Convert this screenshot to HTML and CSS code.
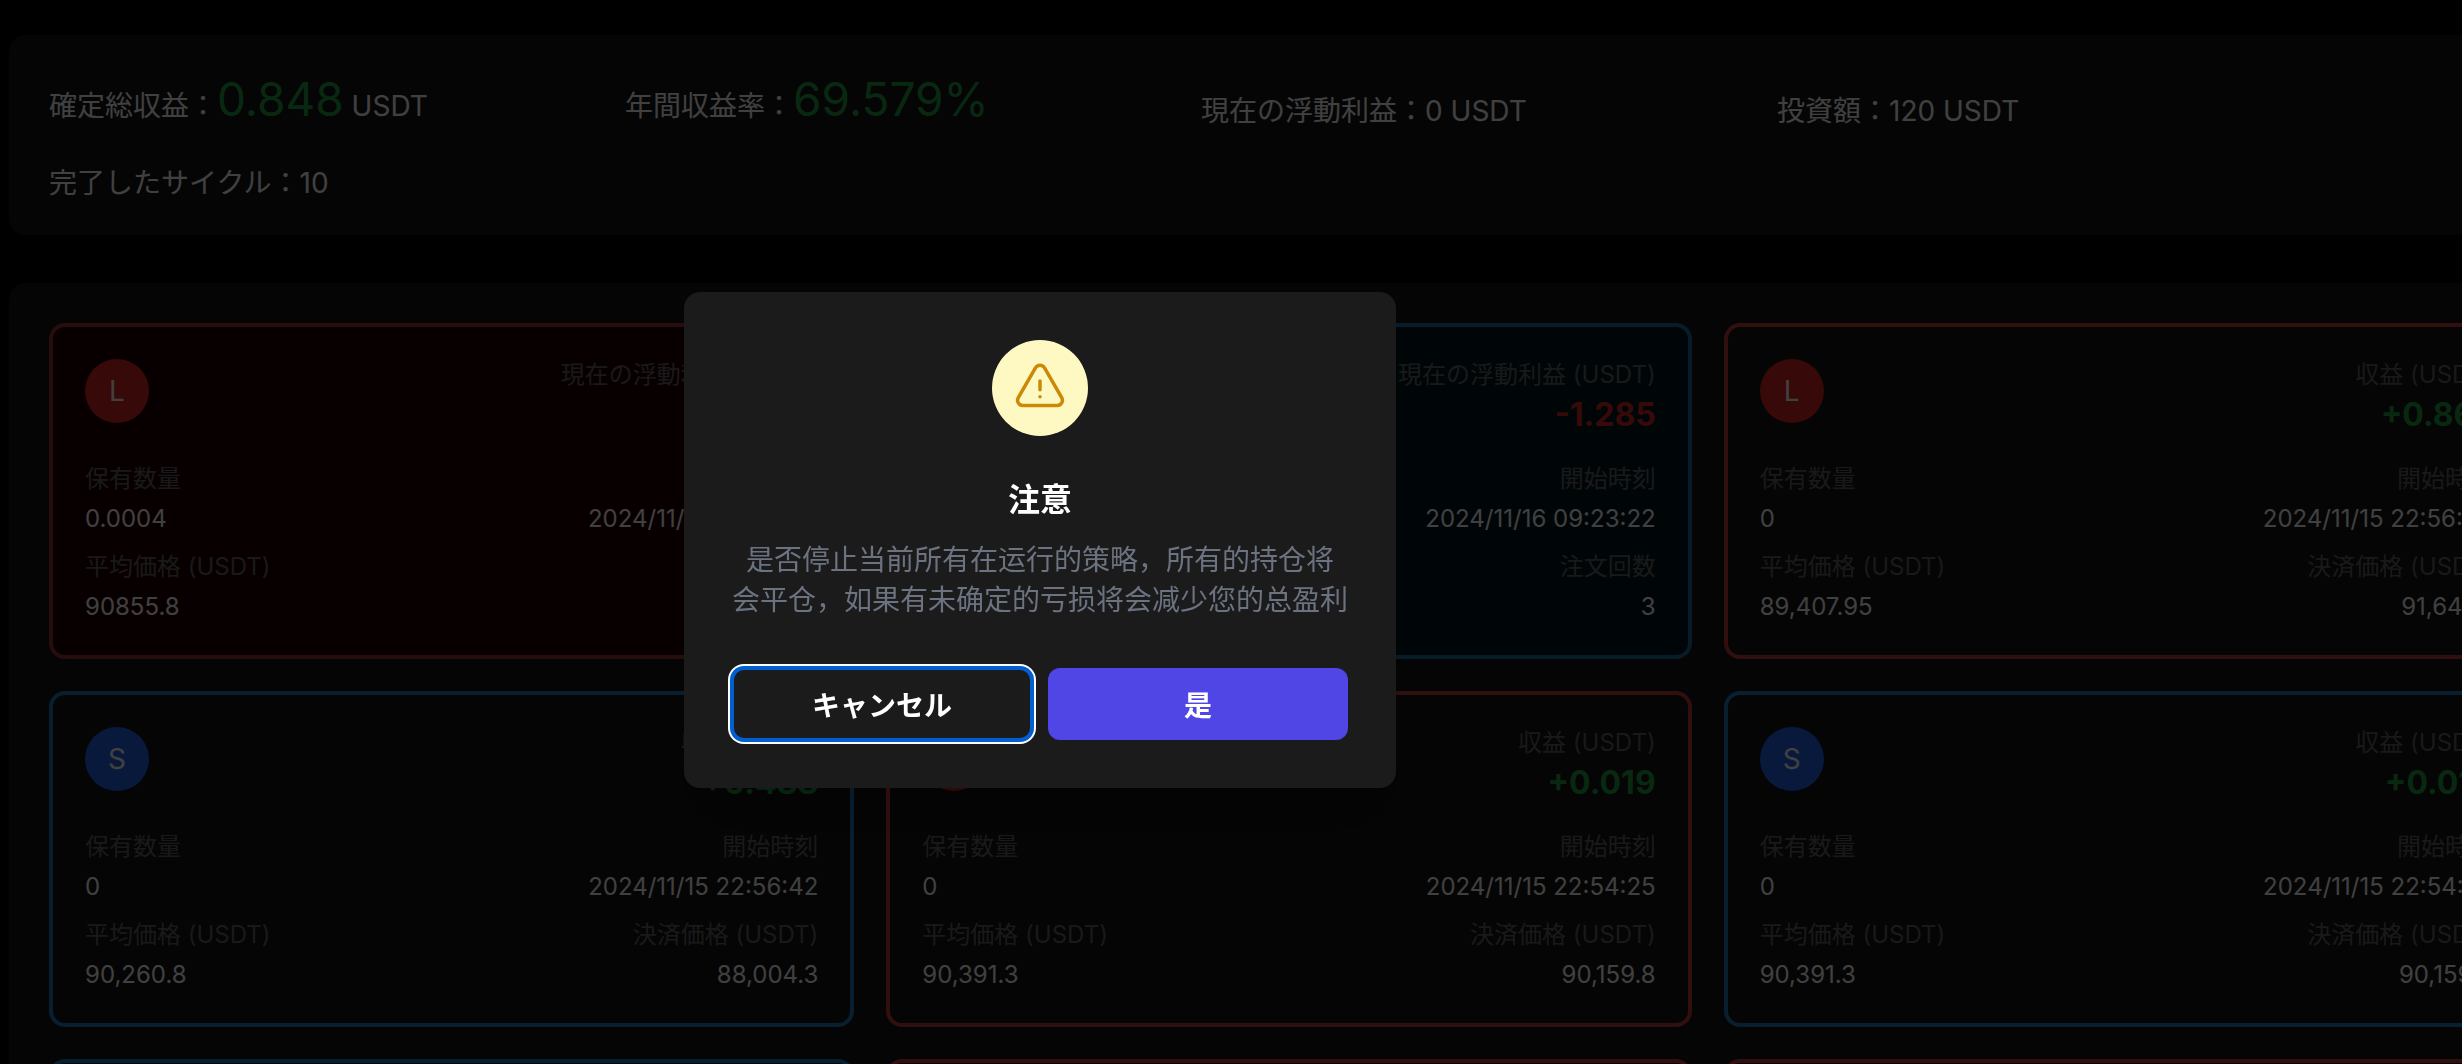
FILE: index.html
```
<!DOCTYPE html>
<html lang="ja">
<head>
  <meta charset="UTF-8" />
  <meta name="viewport" content="width=device-width, initial-scale=1.0" />
  <title>戦略</title>
  <link rel="stylesheet" href="styles.css">
</head>
<body>
  <main class="page">
    <section class="panel summary">
      <div class="stat">確定総収益：<span class="big">0.848</span> USDT</div>
      <div class="stat">年間収益率：<span class="big">69.579%</span></div>
      <div class="stat">現在の浮動利益：0 USDT</div>
      <div class="stat">投資額：120 USDT</div>
      <div class="stat">完了したサイクル：10</div>
    </section>

    <section class="panel cards" id="cards"></section>
  </main>

  <div class="overlay">
    <div class="dialog" role="dialog" aria-modal="true" aria-labelledby="dialogTitle" lang="zh-CN">
      <div class="dialog-icon">
        <svg viewBox="0 0 24 24" fill="none" stroke="currentColor" stroke-width="1.5" stroke-linecap="round" stroke-linejoin="round" aria-hidden="true">
          <path d="M12 9v3.75m-9.303 3.376c-.866 1.5.217 3.374 1.948 3.374h14.71c1.73 0 2.813-1.874 1.948-3.374L13.949 3.378c-.866-1.5-3.032-1.5-3.898 0L2.697 16.126zM12 15.75h.007v.008H12v-.008z" />
        </svg>
      </div>
      <h3 id="dialogTitle">注意</h3>
      <p>是否停止当前所有在运行的策略，所有的持仓将<br>会平仓，如果有未确定的亏损将会减少您的总盈利</p>
      <div class="dialog-actions">
        <button type="button" class="btn-cancel" lang="ja">キャンセル</button>
        <button type="button" class="btn-confirm">是</button>
      </div>
    </div>
  </div>

  <script src="script.js"></script>
</body>
</html>
```
FILE: styles.css
```
* {
  box-sizing: border-box;
}

body {
  margin: 0;
  height: 100vh;
  overflow: hidden;
  background: #000;
  color: #fff;
  font-family: Inter, 'Noto Sans CJK JP', sans-serif;
  font-size: 24px;
  line-height: 32px;
}

/* the panels run past the right edge of the window */
.page {
  display: flex;
  flex-direction: column;
  gap: 48px;
  margin: 35px -107px 0 9px;
}

.panel {
  background: #141414;
  border-radius: 16px;
}

.summary {
  display: flex;
  flex-wrap: wrap;
  align-items: flex-end;
  row-gap: 32px;
  padding: 32px 40px;
  font-size: 28px;
  line-height: 40px;
}

.stat {
  width: 576px;
}

.big {
  color: #22a045;
  font-size: 46px;
  line-height: 64px;
}

.cards {
  display: grid;
  grid-template-columns: repeat(3, 1fr);
  gap: 32px;
  padding: 40px;
}

.card {
  border: 4px solid;
  border-radius: 16px;
  padding: 32px;
}

.card.long {
  border-color: #c83c3c;
}

.card.short {
  border-color: #207cc0;
}

.card.long.running {
  border-color: #a03434;
  background: #200000;
}

.card.short.running {
  border-color: #1c6ca0;
  background: #001820;
}

.card-head {
  display: flex;
  justify-content: space-between;
  margin-bottom: 24px;
}

.side {
  width: 64px;
  height: 64px;
  border-radius: 50%;
  font-size: 28px;
  line-height: 64px;
  text-align: center;
}

.long .side {
  background: #dc2626;
}

.short .side {
  background: #2563eb;
}

.label {
  color: #666;
}

.right {
  text-align: right;
}

.profit {
  font-size: 32px;
  font-weight: 700;
  line-height: 48px;
}

.up {
  color: #22a045;
}

.down {
  color: #dc2626;
}

.card-body {
  display: grid;
  grid-template-columns: 1fr 1fr;
  row-gap: 16px;
}

.card-body .label {
  margin-bottom: 8px;
}

.overlay {
  position: fixed;
  inset: 0;
  display: flex;
  align-items: center;
  justify-content: center;
  padding: 16px 382px 0 0;
  background: rgba(0, 0, 0, 0.75);
}

.dialog {
  width: 100%;
  max-width: 712px;
  padding: 48px;
  background: #1b1b1b;
  border-radius: 16px;
  box-shadow: 0 40px 50px -10px rgba(0, 0, 0, 0.1), 0 16px 20px -12px rgba(0, 0, 0, 0.1);
  font-family: Inter, 'Noto Sans CJK SC', sans-serif;
  text-align: center;
}

.dialog-icon {
  display: flex;
  align-items: center;
  justify-content: center;
  width: 96px;
  height: 96px;
  margin: 0 auto 40px;
  border-radius: 50%;
  background: #fef9c3;
  color: #ca8a04;
}

.dialog-icon svg {
  width: 56px;
  height: 56px;
}

.dialog h3 {
  margin: 0 0 16px;
  font-size: 32px;
  font-weight: 600;
  line-height: 48px;
}

.dialog p {
  margin: 0 -8px 48px;
  color: #6b7280;
  font-size: 28px;
  line-height: 40px;
  white-space: nowrap;
}

.dialog-actions {
  display: grid;
  grid-template-columns: 1fr 1fr;
  gap: 16px;
}

.dialog button {
  height: 72px;
  padding: 0;
  border: none;
  border-radius: 12px;
  color: #fff;
  font-family: Inter, 'Noto Sans CJK JP', sans-serif;
  font-size: 28px;
  font-weight: 600;
  cursor: pointer;
}

.dialog .btn-cancel {
  border: 2px solid #0060d0;
  background: #1b1b1b;
  box-shadow: 0 0 0 2px #0060d0, 0 0 0 4px #fff;
}

.dialog .btn-confirm {
  background: #4f46e5;
}
```
FILE: script.js
```
const cards = [
  { side: 'L', running: true, profit: '-0.416', amount: '0.0004', time: '2024/11/16 09:23:22', avg: '90855.8', last: '1' },
  { side: 'S', running: true, profit: '-1.285', amount: '0.0012', time: '2024/11/16 09:23:22', avg: '90260.8', last: '3' },
  { side: 'L', profit: '+0.867', amount: '0', time: '2024/11/15 22:56:42', avg: '89,407.95', last: '91,641.5' },
  { side: 'S', profit: '+0.488', amount: '0', time: '2024/11/15 22:56:42', avg: '90,260.8', last: '88,004.3' },
  { side: 'L', profit: '+0.019', amount: '0', time: '2024/11/15 22:54:25', avg: '90,391.3', last: '90,159.8' },
  { side: 'S', profit: '+0.019', amount: '0', time: '2024/11/15 22:54:25', avg: '90,391.3', last: '90,159.8' },
  { side: 'S', profit: '+0.019', amount: '0', time: '2024/11/15 22:54:25', avg: '90,391.3', last: '90,159.8' },
  { side: 'L', profit: '+0.019', amount: '0', time: '2024/11/15 22:54:25', avg: '90,391.3', last: '90,159.8' },
  { side: 'L', profit: '+0.019', amount: '0', time: '2024/11/15 22:54:25', avg: '90,391.3', last: '90,159.8' }
];

function cell(label, value, cls) {
  return `<div class="${cls}"><div class="label">${label}</div><div>${value}</div></div>`;
}

document.getElementById('cards').innerHTML = cards.map(c => `
  <article class="card ${c.side === 'L' ? 'long' : 'short'} ${c.running ? 'running' : ''}">
    <div class="card-head">
      <div class="side">${c.side}</div>
      <div class="right">
        <div class="label">${c.running ? '現在の浮動利益' : '収益'} (USDT)</div>
        <div class="profit ${c.profit[0] === '+' ? 'up' : 'down'}">${c.profit}</div>
      </div>
    </div>
    <div class="card-body">
      ${cell('保有数量', c.amount, '')}
      ${cell('開始時刻', c.time, 'right')}
      ${cell('平均価格 (USDT)', c.avg, '')}
      ${cell(c.running ? '注文回数' : '決済価格 (USDT)', c.last, 'right')}
    </div>
  </article>`).join('');
```
